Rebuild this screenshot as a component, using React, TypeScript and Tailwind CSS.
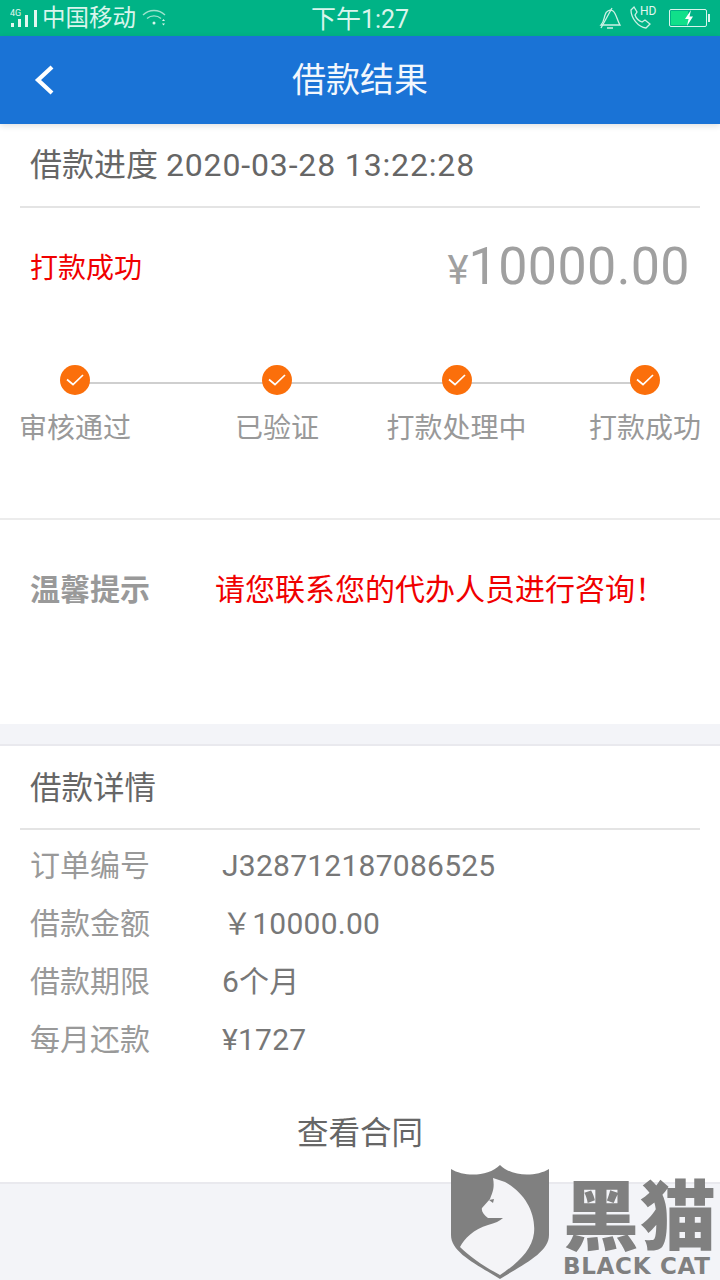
import React from "react";

const CJK = "font-['Roboto','Noto_Sans_CJK_SC',sans-serif]";

function Check() {
  return (
    <div className="flex h-[30px] w-[30px] items-center justify-center rounded-full bg-[#fb6f0b]">
      <svg width="20" height="14" viewBox="0 0 20 14" fill="none" stroke="#fff" strokeWidth="1.7">
        <path d="M2 6.5 L8 11.5 L18 2" />
      </svg>
    </div>
  );
}

function Step({ label, width, ml }: { label: string; width: string; ml: string }) {
  return (
    <div className={`flex flex-col items-center ${width} ${ml}`}>
      <Check />
      <div className="mt-[14px] h-[40px] whitespace-nowrap text-[28px] leading-[40px] text-[#999]">{label}</div>
    </div>
  );
}

function Detail({ k, v }: { k: string; v: string }) {
  return (
    <div className="flex h-[58px] items-center pl-[30px]">
      <div className="w-[192px] text-[30px] text-[#999]">{k}</div>
      <div className="whitespace-pre text-[30px] tracking-[0.25px] text-[#777]">{v}</div>
    </div>
  );
}

export default function App() {
  return (
    <div className={`relative h-[1280px] w-[720px] overflow-hidden bg-[#f3f4f8] ${CJK}`}>
      <div className="flex h-[36px] items-center justify-between bg-[#00b386] pl-[10px] pr-[10px] text-[#d9f5ec]">
        <div className="flex w-[240px] items-center">
          <svg width="30" height="22" viewBox="0 0 30 22" fill="#e3f7f0">
            <text x="0" y="9" fontSize="9" fontFamily="Roboto">4G</text>
            <rect x="1" y="16" width="3" height="4" />
            <rect x="8" y="12" width="3" height="8" />
            <rect x="15" y="8" width="3" height="12" />
            <rect x="24" y="3" width="3" height="17" />
          </svg>
          <span className="ml-[2px] pt-[2px] text-[23.5px] leading-none">中国移动</span>
          <svg className="ml-[5px]" width="26" height="20" viewBox="0 0 26 20" fill="none" stroke="#9fe3cd" strokeWidth="1.4">
            <path d="M2 7 C8 1 18 1 24 7" />
            <path d="M6 10.5 C10 7 16 7 20 10.5" />
            <circle cx="13" cy="15" r="1.5" fill="#d9f5ec" stroke="none" />
            <path d="M21 13 l1.5 -2 l1.5 2 z M21 15.5 l1.5 2 l1.5 -2 z" fill="#d9f5ec" stroke="none" />
          </svg>
        </div>
        <div className="pt-[2px] text-[25px] leading-none">下午1:27</div>
        <div className="flex w-[240px] items-center justify-end">
          <svg width="24" height="24" viewBox="0 0 24 24" fill="none" stroke="#cdf1e5" strokeWidth="1.3">
            <path d="M3 19 C6 16 6 12 7 9 C8 5 12 3 15 5 C18 7 19 14 22 19 Z" />
            <path d="M9 22 h6 M3 22 L14 2" />
          </svg>
          <svg className="ml-[6px]" width="30" height="28" viewBox="0 0 30 28" fill="none" stroke="#cdf1e5" strokeWidth="1.3">
            <path d="M3 6 L6 3 L9 8 L7 11 C8 14 11 17 14 18 L17 16 L22 20 L18 24 C10 23 3 14 3 6 Z" />
            <text x="12" y="11" fontSize="12" fontFamily="Roboto" fill="#e3f7f0" stroke="none">HD</text>
          </svg>
          <div className="relative ml-[11px] flex h-[18px] w-[38px] items-center rounded-[2px] border border-[#d9f5ec] p-[1px]">
            <div className="h-full w-[17px] bg-[#10e08a]" />
            <svg className="absolute left-[12px] top-[0px]" width="14" height="16" viewBox="0 0 14 16" fill="#fff">
              <path d="M9 0 L3 9 H6.5 L5 16 L11 6.5 H7.5 Z" />
            </svg>
          </div>
          <div className="ml-[1px] h-[8px] w-[2px] bg-[#d9f5ec]" />
        </div>
      </div>

      <div className="relative z-10 flex h-[88px] items-center justify-center bg-[#1a73d6] shadow-[0_2px_6px_rgba(0,0,0,0.12)]">
        <svg className="absolute left-[33px] top-[28px]" width="22" height="32" viewBox="0 0 22 32" fill="none" stroke="#fff" strokeWidth="4.2">
          <path d="M19 3 L5 16 L19 29" />
        </svg>
        <div className="text-[34px] leading-none text-[#f2f7fd]">借款结果</div>
      </div>

      <div className="h-[600px] bg-white">
        <div className="mx-[20px] flex h-[84px] items-center whitespace-pre border-b-2 border-[#e4e4e4] pl-[10px] text-[32px] text-[#666]">
          <span>借款进度 </span>
          <span className="tracking-[0.85px]">2020-03-28 13:22:28</span>
        </div>
        <div className="flex h-[120px] items-center justify-between pl-[30px] pr-[30px] pt-[2px]">
          <div className="text-[28px] text-[#f00000]">打款成功</div>
          <div className="flex items-baseline pb-[4px] text-[#a0a0a0]">
            <span className="text-[40px] leading-none">¥</span>
            <span className="text-[52px] leading-none tracking-[0.4px]">10000.00</span>
          </div>
        </div>
        <div className="relative flex h-[190px] pl-[20px] pt-[37px]">
          <div className="absolute left-[75px] top-[54px] h-[2px] w-[570px] bg-[#cfcfcf]" />
          <div className="relative flex">
            <Step label="审核通过" width="w-[110px]" ml="ml-0" />
            <Step label="已验证" width="w-[82px]" ml="ml-[106px]" />
            <Step label="打款处理中" width="w-[139px]" ml="ml-[69px]" />
            <Step label="打款成功" width="w-[110px]" ml="ml-[64px]" />
          </div>
        </div>
        <div className="flex h-[206px] border-t-2 border-[#ececec] pl-[30px] pt-[49px]">
          <div className="w-[185px] text-[30px] leading-[42px] font-bold text-[#999]">温馨提示</div>
          <div className="whitespace-nowrap text-[30px] leading-[42px] text-[#f00000]">请您联系您的代办人员进行咨询！</div>
        </div>
      </div>

      <div className="mt-[20px] h-[440px] border-y-2 border-[#e9e9ee] bg-white">
        <div className="mx-[20px] flex h-[84px] items-center border-b-2 border-[#e4e4e4] pl-[10px] pt-[3px] text-[31.5px] text-[#666]">
          借款详情
        </div>
        <div className="pt-[6px]">
          <Detail k="订单编号" v="J328712187086525" />
          <Detail k="借款金额" v="￥10000.00" />
          <Detail k="借款期限" v="6个月" />
          <Detail k="每月还款" v="¥1727" />
        </div>
        <div className="mt-[43px] text-center text-[31.5px] leading-[46px] text-[#666]">查看合同</div>
      </div>

      <div className="absolute left-[450px] top-[1165px] flex text-[#808080]">
        <svg width="100" height="115" viewBox="0 0 100 115">
          <path d="M1 4 C14 12 38 12 50 0 C62 12 86 12 99 4 V70 C99 88 72 100 50 114 C28 100 1 88 1 70 Z" fill="#808080" />
          <path d="M43 13 L55 17 C75 28 86 48 84 68 C82 85 68 98 50 110 C35 102 20 92 10 82 C14 74 24 64 38 60 C45 58 50 56 53 53 L38 53 C34 50 31 46 32 43 L40 34 C42 28 45 24 43 13 Z" fill="#f4f4f7" />
          <path d="M39 35 L44 34 L43 38 Z" fill="#808080" />
        </svg>
        <div className="ml-[13px] flex flex-col items-start">
          <div className="whitespace-nowrap pt-[5px] text-[76px] font-black leading-[82px] tracking-[1px] [font-family:'Noto_Sans_CJK_SC',sans-serif]">黑猫</div>
          <div className="mt-[2px] whitespace-nowrap text-[23px] font-bold leading-[24px] tracking-[0.7px] [font-family:'DejaVu_Sans',sans-serif]">BLACK CAT</div>
        </div>
      </div>
    </div>
  );
}
